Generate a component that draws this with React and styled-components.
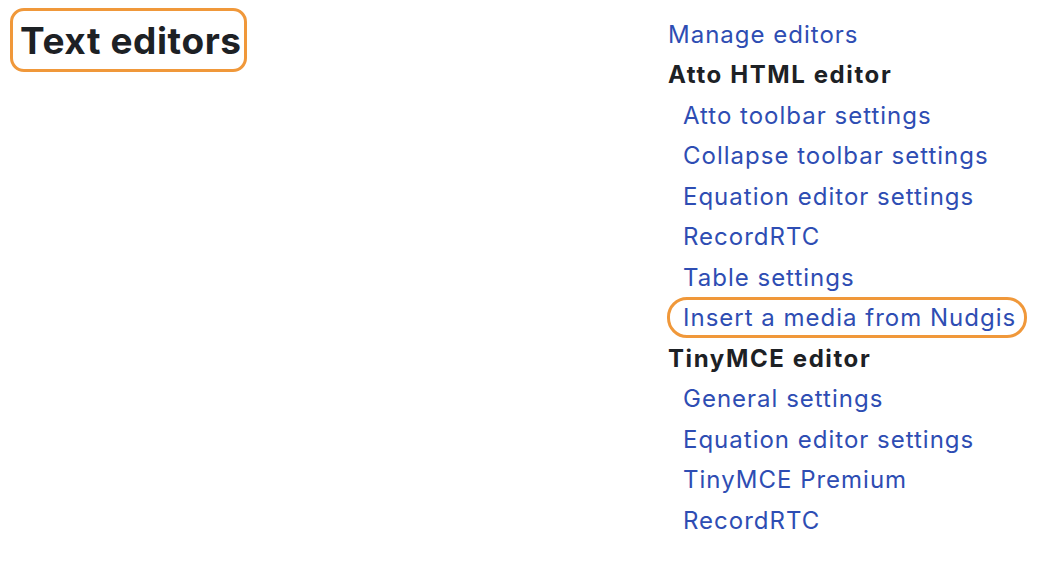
import React from 'react';
import styled, { createGlobalStyle } from 'styled-components';

const GlobalStyle = createGlobalStyle`
  body {
    margin: 0;
    background: #fff;
    font-family: Inter, "Liberation Sans", Arial, sans-serif;
  }
`;

const Page = styled.div`
  display: grid;
  grid-template-columns: 668px 1fr;
  width: 1042px;
  height: 562px;
`;

const TitleBox = styled.div`
  margin: 8px 0 0 10px;
  height: 58px;
  padding: 0 2px 0 7px;
  border: 3px solid #f0983a;
  border-radius: 14px;
  display: flex;
  align-items: center;
  align-self: start;
  justify-self: start;
`;

const Title = styled.h2`
  margin: 0;
  font-size: 37px;
  font-weight: 700;
  color: #1d2125;
  letter-spacing: 0.6px;
`;

const Nav = styled.ul`
  list-style: none;
  margin: 14px 0 0 0;
  padding: 0;
`;

const Item = styled.li`
  height: 40.5px;
  display: flex;
  align-items: center;
  padding-left: ${(p) => (p.$sub ? '15px' : '0')};
`;

const Link = styled.a`
  font-size: 24px;
  color: #2e4db3;
  text-decoration: none;
  white-space: nowrap;
  letter-spacing: 1px;
  ${(p) =>
    p.$marked &&
    `
    margin-left: -16px;
    padding: 3px 8px 3px 13px;
    border: 3px solid #f0983a;
    border-radius: 20px;
  `}
`;

const Heading = styled.span`
  font-size: 24px;
  font-weight: 700;
  color: #1d2125;
  letter-spacing: 1.6px;
`;

const sections = [
  { link: 'Manage editors' },
  {
    heading: 'Atto HTML editor',
    items: [
      'Atto toolbar settings',
      'Collapse toolbar settings',
      'Equation editor settings',
      'RecordRTC',
      'Table settings',
      'Insert a media from Nudgis',
    ],
  },
  {
    heading: 'TinyMCE editor',
    items: ['General settings', 'Equation editor settings', 'TinyMCE Premium', 'RecordRTC'],
  },
];

export default function App() {
  return (
    <Page>
      <GlobalStyle />
      <TitleBox>
        <Title>Text editors</Title>
      </TitleBox>
      <Nav>
        {sections.map((s) =>
          s.link ? (
            <Item key={s.link}>
              <Link href="#">{s.link}</Link>
            </Item>
          ) : (
            <React.Fragment key={s.heading}>
              <Item>
                <Heading>{s.heading}</Heading>
              </Item>
              {s.items.map((it) => (
                <Item key={it} $sub>
                  <Link href="#" $marked={it.includes('Nudgis')}>
                    {it}
                  </Link>
                </Item>
              ))}
            </React.Fragment>
          )
        )}
      </Nav>
    </Page>
  );
}
